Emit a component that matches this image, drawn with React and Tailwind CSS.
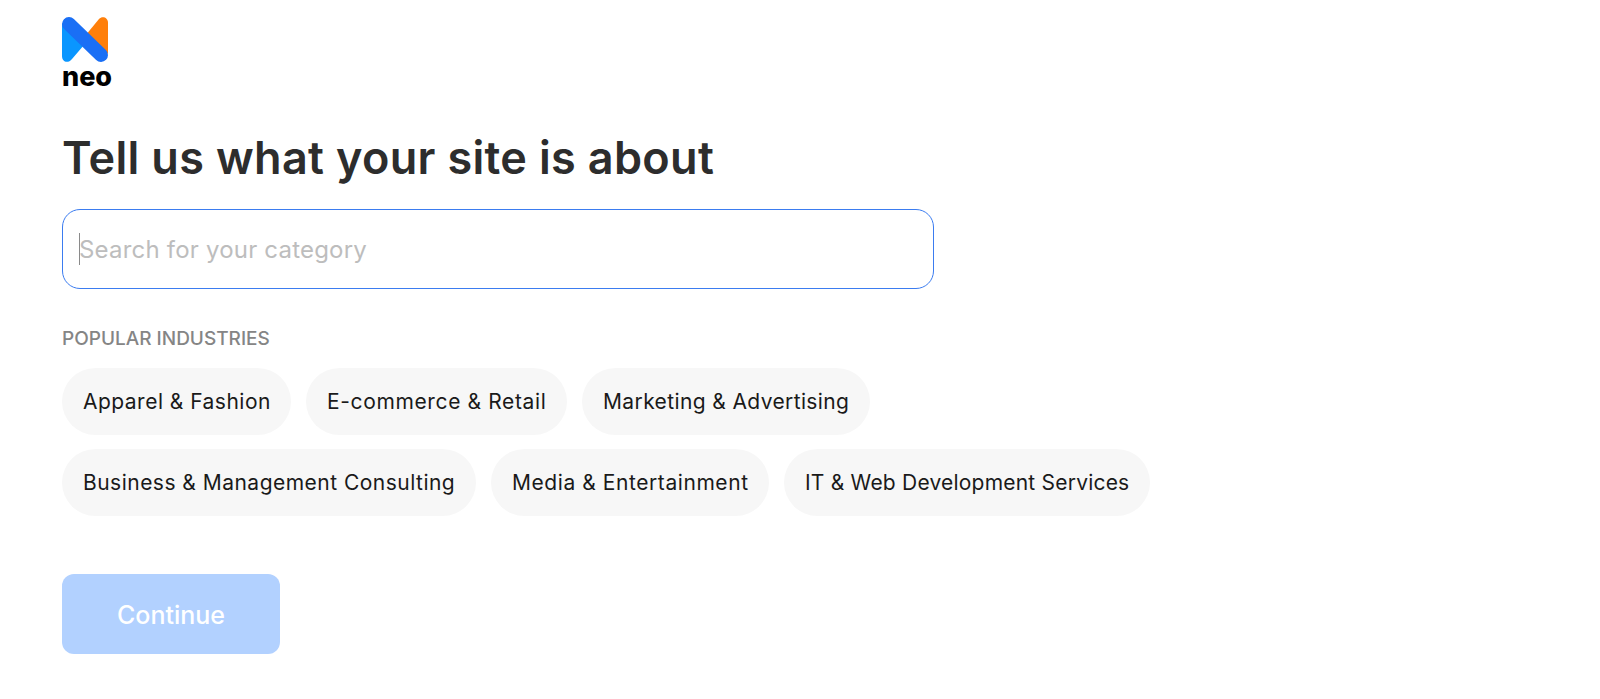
const ROW_ONE = [
  { label: 'Apparel & Fashion', cls: 'w-[229px] tracking-[0.48px]' },
  { label: 'E-commerce & Retail', cls: 'w-[261px] tracking-[0.63px]' },
  { label: 'Marketing & Advertising', cls: 'w-[288px] tracking-[0.38px]' },
];

const ROW_TWO = [
  { label: 'Business & Management Consulting', cls: 'w-[414px] tracking-[0.48px]' },
  { label: 'Media & Entertainment', cls: 'w-[278px] tracking-[0.57px]' },
  { label: 'IT & Web Development Services', cls: 'w-[366px] tracking-[0.21px]' },
];

function Logo() {
  return (
    <div className="flex flex-col items-start">
      <svg width="46" height="46" viewBox="0 0 46 46" fill="none">
        <path d="M23 19 L37 2 C40 -1 46 0 46 6 L46 37 Z" fill="#ff7f0a" />
        <path d="M0 6 L22 28 L10 42 C6 47 0 45 0 39 Z" fill="#0a96ff" />
        <path d="M7 7 L39 38" stroke="#1a6ff5" strokeWidth="14" strokeLinecap="round" />
      </svg>
      <span className="text-[27px] leading-[28px] font-extrabold text-black font-['Inter',sans-serif]">neo</span>
    </div>
  );
}

function Chip({ label, cls }) {
  return (
    <div className={`${cls} h-[67px] flex items-center rounded-[34px] bg-[#f7f7f7] pl-[21px] text-[21px] text-[#1a1a1a] whitespace-nowrap`}>
      {label}
    </div>
  );
}

export default function App() {
  return (
    <div className="min-h-[699px] bg-white px-[62px] pt-[17px] font-['Inter',sans-serif]">
      <Logo />

      <h1 className="mt-[37px] text-[45px] leading-[60px] font-semibold text-[#2d2d2d] tracking-[0.33px]">
        Tell us what your site is about
      </h1>

      <div className="relative mt-[21px] w-[872px]">
        <input
          type="text"
          placeholder="Search for your category"
          className="w-full h-[80px] rounded-[18px] border border-[#3b7cf0] bg-white px-[16px] text-[24px] tracking-[0.2px] outline-none placeholder:text-[#bdbdbd]"
        />
        <span className="absolute left-[17px] top-[24px] h-[32px] w-px bg-[#8a8a8a]" />
      </div>

      <p className="mt-[37px] text-[19px] leading-[26px] text-[#858585] font-medium">POPULAR INDUSTRIES</p>

      <div className="mt-[16px] flex flex-col gap-[14px]">
        <div className="flex gap-[15px]">
          {ROW_ONE.map(c => <Chip key={c.label} {...c} />)}
        </div>
        <div className="flex gap-[15px]">
          {ROW_TWO.map(c => <Chip key={c.label} {...c} />)}
        </div>
      </div>

      <button className="mt-[58px] flex h-[80px] w-[218px] items-center justify-center rounded-[12px] bg-[#b2d1ff] pt-[3px] text-[25px] font-medium text-white">
        Continue
      </button>
    </div>
  );
}
